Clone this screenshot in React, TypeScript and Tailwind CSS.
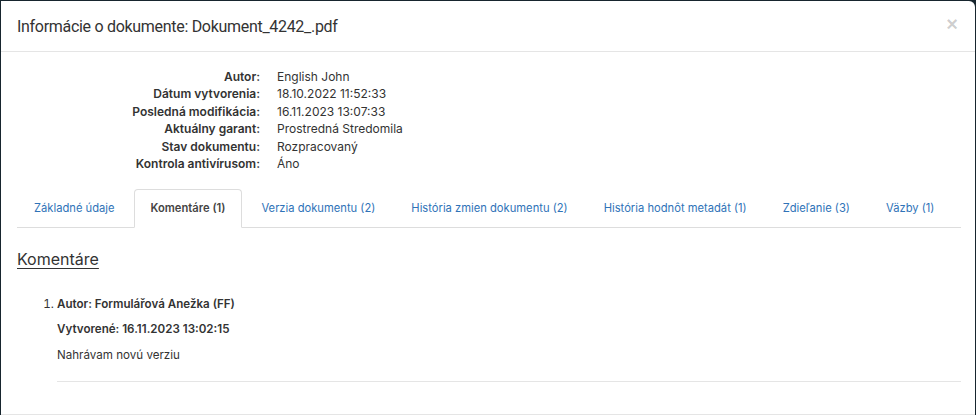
const info = [
  { label: 'Autor:', value: 'English John' },
  { label: 'Dátum vytvorenia:', value: '18.10.2022 11:52:33' },
  { label: 'Posledná modifikácia:', value: '16.11.2023 13:07:33' },
  { label: 'Aktuálny garant:', value: 'Prostredná Stredomila' },
  { label: 'Stav dokumentu:', value: 'Rozpracovaný' },
  { label: 'Kontrola antivírusom:', value: 'Áno' },
];

const tabs = [
  { label: 'Základné údaje', active: false },
  { label: 'Komentáre (1)', active: true },
  { label: 'Verzia dokumentu (2)', active: false },
  { label: 'História zmien dokumentu (2)', active: false },
  { label: 'História hodnôt metadát (1)', active: false },
  { label: 'Zdieľanie (3)', active: false },
  { label: 'Väzby (1)', active: false },
];

export default function App() {
  return (
    <div className="w-[976px] h-[415px] overflow-hidden bg-[#17252e] pt-px pl-px">
      <div
        className="w-[974px] h-[414px] bg-white rounded-tr-md flex flex-col text-[#333]"
        style={{ fontFamily: 'Inter, "Noto Sans", sans-serif' }}
      >
        {/* Header */}
        <div className="h-[51px] shrink-0 flex items-center justify-between px-4 border-b border-[#e5e5e5]">
          <h4
            className="text-[16px] text-[#333] tracking-[-0.3px] mt-[2px]"
            style={{ fontFamily: 'Roboto, "Liberation Sans", sans-serif' }}
          >
            Informácie o dokumente: Dokument_4242_.pdf
          </h4>
          <button
            className="text-[20px] font-bold leading-none text-black/20 mr-[1px] -mt-[4px]"
            style={{ fontFamily: '"Liberation Sans", Arial, sans-serif' }}
          >
            ×
          </button>
        </div>

        {/* Body */}
        <div className="flex-1 px-4 pt-[16px]">
          <div className="grid grid-cols-[243px_1fr] gap-x-[17px] text-[12px] leading-[17.4px]">
            {info.map((row) => (
              <div key={row.label} className="contents">
                <div className="text-right font-semibold">{row.label}</div>
                <div>{row.value}</div>
              </div>
            ))}
          </div>

          {/* Tabs */}
          <ul className="flex mt-[17px] border-b border-[#ddd] w-[944px]">
            {tabs.map((tab) => (
              <li key={tab.label} className="mr-[2px] -mb-px">
                <a
                  className={`block whitespace-nowrap h-[39px] leading-[37px] px-4 text-[11.2px] rounded-t ${
                    tab.active
                      ? 'bg-white border border-[#ddd] border-b-white font-semibold text-[#444]'
                      : 'border border-transparent text-[#2f73b8]'
                  }`}
                >
                  {tab.label}
                </a>
              </li>
            ))}
          </ul>

          {/* Comments */}
          <div className="pt-[20px]">
            <h3 className="text-[16px] underline underline-offset-[3px] decoration-1 leading-[22px]">Komentáre</h3>
            <ol className="list-decimal pl-[40px] mt-[26px] text-[11.6px] leading-[17px]">
              <li>
                <p className="font-semibold">Autor: Formulářová Anežka (FF)</p>
                <p className="font-semibold mt-[8px]">Vytvorené: 16.11.2023 13:02:15</p>
                <p className="mt-[9px]">Nahrávam novú verziu</p>
                <div className="border-t border-[#e5e5e5] mt-[17px] w-[904px]" />
              </li>
            </ol>
          </div>
        </div>

        {/* Footer */}
        <div className="h-[1px] shrink-0 border-t border-[#e5e5e5]" />
      </div>
    </div>
  );
}
